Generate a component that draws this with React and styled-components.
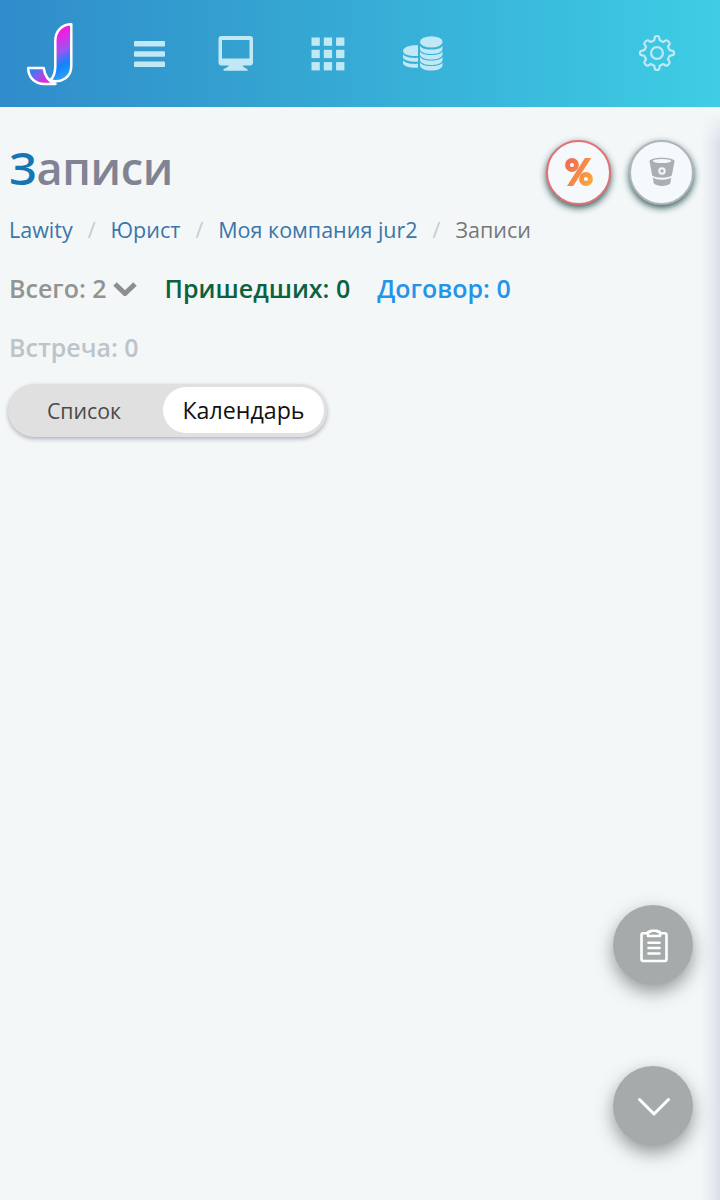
import styled, { createGlobalStyle } from "styled-components";

const GlobalStyle = createGlobalStyle`
    * {
        box-sizing: border-box;
    }
    body {
        margin: 0;
        background: #f3f7f8;
        font-family: "Open Sans", "Noto Sans", sans-serif;
    }
`;

const crumbs = ['Lawity', 'Юрист', 'Моя компания jur2'];

const stats = [
    { label: 'Всего', count: 2, color: '#929494', gap: 28, hasMenu: true },
    { label: 'Пришедших', count: 0, color: '#0c613f', gap: 27 },
    { label: 'Договор', count: 0, color: '#2394e8', gap: 0 },
    { label: 'Встреча', count: 0, color: '#bcc4ca', gap: 0 },
];

const Logo = () => (
    <svg width="54" height="70" viewBox="0 0 54 70">
        <defs>
            <linearGradient id="stem" x1="0.3" y1="0" x2="0.5" y2="1">
                <stop offset="0.2" stopColor="#f01ee4" />
                <stop offset="0.5" stopColor="#9a55f0" />
                <stop offset="0.75" stopColor="#0d86fb" />
                <stop offset="1" stopColor="#35a0f5" />
            </linearGradient>
            <linearGradient id="hook" x1="0" y1="0" x2="1" y2="0.6">
                <stop offset="0.1" stopColor="#1688f8" />
                <stop offset="0.45" stopColor="#7b60ee" />
                <stop offset="0.8" stopColor="#e02bdc" />
            </linearGradient>
        </defs>
        <g stroke="#fff" strokeWidth="2.500" strokeLinejoin="round">
            <path d="M48.300 5.200C39 5.200 32.300 12 32.300 22V47C32.300 54 30.500 58.500 27 61.500C39 64.500 48.300 58 48.300 47Z" fill="url(#stem)" />
            <path d="M5.200 49H20.700C21.700 57 26 62.500 32.500 65H21.500C11.500 65 5.200 58 5.200 49Z" fill="url(#hook)" />
        </g>
    </svg>
);

const MenuIcon = () => (
    <svg width="32" height="28" viewBox="0 0 32 28" fill="currentColor">
        <rect x="0" y="1" width="31" height="5.500" rx="1" />
        <rect x="0" y="11.200" width="31" height="5.500" rx="1" />
        <rect x="0" y="21.400" width="31" height="5.500" rx="1" />
    </svg>
);

const ScreenIcon = () => (
    <svg width="36" height="36" viewBox="0 0 36 36" fill="currentColor">
        <path fillRule="evenodd" d="M3.500 0H32a3 3 0 0 1 3 3V26.500a3 3 0 0 1-3 3H24.500C25 31 27 32 29.500 33.200V34.800H5.500V33.200C8 32 10 31 11 29.500H3.500a3 3 0 0 1-3-3V3a3 3 0 0 1 3-3ZM4 4V22.500H31.500V4Z" />
    </svg>
);

const GridIcon = () => (
    <svg width="34" height="34" viewBox="0 0 34 34" fill="currentColor">
        {[0, 12.300, 24.600].map((y) => (
            [0, 12.300, 24.600].map((x) => (
                <rect key={`${x}-${y}`} x={x + 0.500} y={y + 0.500} width="8.300" height="8.300" />
            ))
        ))}
    </svg>
);

const CoinsIcon = () => (
    <svg width="40" height="36" viewBox="0 0 40 36" fill="currentColor">
        <ellipse cx="28.300" cy="5.900" rx="11.300" ry="5.700" />
        {[0, 5.500, 11, 16.500].map((y) => (
            <path key={y} transform={`translate(0 ${y})`} d="M17 9.700C19.500 14.900 37 14.900 39.500 9.700V13.200C37.500 19.700 19 19.700 17 13.200Z" />
        ))}
        <path d="M15 9.200C7 8.700 0 11 0 15C0 18.500 7 20.600 15 20Z" />
        <path d="M0 18.300C2.500 21.300 8 22.200 15 21.800V25.800C8 26.200 2 24.900 0 21.800Z" />
        <path d="M0 24.300C2.500 27.300 8 28.200 15 27.800V31.800C8 32.200 2 30.900 0 27.800Z" />
    </svg>
);

const GearIcon = () => (
    <svg width="38" height="38" viewBox="-19 -19 38 38" fill="none" stroke="currentColor" strokeWidth="2.200" strokeLinejoin="round">
        <circle r="5.900" />
        <path d="M-2.200 -15.500Q-2 -17 0 -17Q2 -17 2.200 -15.500L2.800 -12.700Q4.700 -11.700 6.300 -11L8.800 -12.600Q10 -13.200 11.500 -11.500Q13.200 -10 12.600 -8.800L11 -6.300Q11.700 -4.700 12.700 -2.800L15.500 -2.200Q17 -2 17 0Q17 2 15.500 2.200L12.700 2.800Q11.700 4.700 11 6.300L12.600 8.800Q13.200 10 11.500 11.500Q10 13.200 8.800 12.600L6.300 11Q4.700 11.700 2.800 12.700L2.200 15.500Q2 17 0 17Q-2 17 -2.200 15.500L-2.800 12.700Q-4.700 11.700 -6.300 11L-8.800 12.600Q-10 13.200 -11.500 11.500Q-13.200 10 -12.600 8.800L-11 6.300Q-11.700 4.700 -12.700 2.800L-15.500 2.200Q-17 2 -17 0Q-17 -2 -15.500 -2.200L-12.700 -2.800Q-11.700 -4.700 -11 -6.300L-12.600 -8.800Q-13.200 -10 -11.500 -11.500Q-10 -13.200 -8.800 -12.600L-6.300 -11Q-4.700 -11.700 -2.800 -12.700Z" />
    </svg>
);

const PercentIcon = () => (
    <svg width="28" height="28" viewBox="0 0 28 28" fill="none" strokeWidth="4.800">
        <defs>
            <linearGradient id="percent" gradientUnits="userSpaceOnUse" x1="0" y1="4" x2="28" y2="20">
                <stop offset="0" stopColor="#ee6a55" />
                <stop offset="1" stopColor="#faa53c" />
            </linearGradient>
        </defs>
        <circle cx="7" cy="7" r="4.500" stroke="url(#percent)" />
        <circle cx="21" cy="21" r="4.500" stroke="url(#percent)" />
        <path d="M20 0H26.300L8.200 28H2Z" fill="url(#percent)" />
    </svg>
);

const BucketIcon = () => (
    <svg width="26" height="30" viewBox="0 0 26 30">
        <path fill="#abafb1" d="M0.500 4.500C0.500 -0.500 25.500 -0.500 25.500 4.500L22.800 18.500C19 21.500 7 21.500 3.200 18.500Z" />
        <ellipse cx="13" cy="4" rx="9.300" ry="2.100" fill="#f4f8fa" />
        <circle cx="13" cy="14" r="2.700" fill="#abafb1" stroke="#f4f8fa" strokeWidth="2" />
        <path fill="#abafb1" d="M3.800 20.500C8 23.500 18 23.500 22.200 20.500L21.200 26.500C18 29.700 8 29.700 4.800 26.500Z" />
    </svg>
);

const ClipboardIcon = () => (
    <svg width="28" height="34" viewBox="0 0 28 34" fill="none" stroke="#fff" strokeWidth="2.600" strokeLinejoin="round">
        <path d="M8 4.200H3.200Q1.500 4.200 1.500 6V30.300Q1.500 32 3.200 32H24.800Q26.500 32 26.500 30.300V6Q26.500 4.200 24.800 4.200H20" />
        <path d="M8 3.200Q8 2.600 9 2.600H10.500L11 1.800H17L17.500 2.600H19Q20 2.600 20 3.200V7H8Z" />
        <path d="M8.500 13.700H19.500M8.500 19H19.500M8.500 24.500H19.500" strokeLinecap="round" />
    </svg>
);

const ArrowIcon = () => (
    <svg width="34" height="20" viewBox="0 0 34 20" fill="none" stroke="#fff" strokeWidth="3" strokeLinecap="round" strokeLinejoin="round">
        <path d="M2.500 2.500L17 17L31.500 2.500" />
    </svg>
);

const CaretIcon = () => (
    <svg width="24" height="16" viewBox="0 0 24 16" fill="none" stroke="#8c8e8f" strokeWidth="5">
        <path d="M2 4L12 13.500L22 4" />
    </svg>
);

const App = () => {
    return (
        <Page>
            <GlobalStyle />
            <Header>
                <LogoLink href="#"><Logo /></LogoLink>
                <NavButton $ml={57}><MenuIcon /></NavButton>
                <NavButton $ml={52}><ScreenIcon /></NavButton>
                <NavButton $ml={57}><GridIcon /></NavButton>
                <NavButton $ml={58}><CoinsIcon /></NavButton>
                <NavButton $ml="auto"><GearIcon /></NavButton>
            </Header>
            <Main>
                <Content>
                    <TitleRow>
                        <Title>Записи</Title>
                        <RoundButton $border="#e76f74"><PercentIcon /></RoundButton>
                        <RoundButton $border="#aeb5ba"><BucketIcon /></RoundButton>
                    </TitleRow>
                    <Breadcrumbs>
                        {crumbs.map((item) => (
                            <Crumb key={item}><a href="#">{item}</a></Crumb>
                        ))}
                        <Crumb>Записи</Crumb>
                    </Breadcrumbs>
                    <Stats>
                        {stats.map((item) => (
                            <Stat key={item.label} $color={item.color} $gap={item.gap}>
                                {item.label}: {item.count}
                                {item.hasMenu && <CaretIcon />}
                            </Stat>
                        ))}
                    </Stats>
                    <Switch>
                        <SwitchItem>Список</SwitchItem>
                        <SwitchItem $active>Календарь</SwitchItem>
                    </Switch>
                </Content>
                <EdgeShadow />
            </Main>
            <FloatingButtons>
                <FloatingButton><ClipboardIcon /></FloatingButton>
                <FloatingButton><ArrowIcon /></FloatingButton>
            </FloatingButtons>
        </Page>
    );
};

const Page = styled.div`
    display: flex;
    flex-direction: column;
    height: 1200px;
    overflow: hidden;
`;
const Header = styled.header`
    display: flex;
    align-items: center;
    flex-shrink: 0;
    height: 107px;
    padding: 0 44px 0 23px;
    background: linear-gradient(90deg, #308ccb 0%, #34a2d0 35%, #38b2d9 60%, #3ecde4 100%);
`;
const LogoLink = styled.a`
    display: flex;
    margin-top: 1px;
`;
const NavButton = styled.button`
    display: flex;
    margin-left: ${(props) => (props.$ml === 'auto' ? 'auto' : `${props.$ml}px`)};
    margin-top: ${(props) => (props.$ml === 'auto' ? '-2px' : '0')};
    padding: 0;
    border: none;
    background: none;
    color: #c1e8f5;
    cursor: pointer;
`;
const Main = styled.main`
    display: flex;
    flex: 1;
`;
const Content = styled.div`
    flex: 1;
    padding-left: 9px;
`;
const EdgeShadow = styled.div`
    width: 19px;
    margin-top: 6px;
    background: linear-gradient(90deg, #f3f7f8 0%, #e9ecf2 50%, #dbdee8 100%);
    mask-image: linear-gradient(transparent, #000 30px);
`;
const TitleRow = styled.div`
    display: flex;
    align-items: center;
    gap: 18px;
    height: 98px;
    padding: 32px 7px 0 0;
`;
const Title = styled.h1`
    flex: 1;
    margin: -9px 0 0;
    color: #7f8394;
    font-size: 45px;
    line-height: 61px;
    font-weight: 600;
    letter-spacing: -0.3px;

    &::first-letter {
        color: #1476b2;
    }
`;
const RoundButton = styled.button`
    display: flex;
    align-items: center;
    justify-content: center;
    width: 65px;
    height: 65px;
    padding: 0;
    border: 2px solid ${(props) => props.$border};
    border-radius: 50%;
    background: #f6f9fb;
    box-shadow: 0 3px 7px rgba(20, 65, 65, 0.85);
    cursor: pointer;
`;
const Breadcrumbs = styled.ul`
    display: flex;
    height: 52px;
    margin: 0;
    padding: 10px 0 0;
    list-style: none;
    font-size: 21.5px;
    line-height: 30px;
`;
const Crumb = styled.li`
    color: #777;

    & + &::before {
        content: '/';
        padding: 0 15px;
        color: #c8cccf;
    }
    a {
        color: #3a76aa;
        text-decoration: none;
    }
`;
const Stats = styled.div`
    display: flex;
    flex-wrap: wrap;
    width: 600px;
    padding-top: 1px;
`;
const Stat = styled.div`
    display: flex;
    align-items: center;
    gap: 6px;
    height: 59px;
    margin-right: ${(props) => props.$gap}px;
    color: ${(props) => props.$color};
    font-size: 25px;
    font-weight: 600;
    white-space: pre;
`;
const Switch = styled.div`
    display: flex;
    width: 319px;
    height: 53px;
    margin: 8px 0 0 -1px;
    padding: 3px 3px 4px 0;
    border-radius: 27px;
    background: #e0e0e0;
    box-shadow: 0 2px 4px rgba(70, 75, 100, 0.4);
`;
const SwitchItem = styled.button`
    width: ${(props) => (props.$active ? '161px' : '155px')};
    padding: ${(props) => (props.$active ? '0' : '0 3px 0 0')};
    border: none;
    border-radius: 23px;
    background: ${(props) => (props.$active ? '#fff' : 'transparent')};
    color: ${(props) => (props.$active ? '#111' : '#4a4a4a')};
    font-family: inherit;
    font-size: ${(props) => (props.$active ? '23.2px' : '21.3px')};
    cursor: pointer;
`;
const FloatingButtons = styled.div`
    position: fixed;
    right: 27px;
    bottom: 54px;
    display: flex;
    flex-direction: column;
    gap: 81px;
`;
const FloatingButton = styled.button`
    display: flex;
    align-items: center;
    justify-content: center;
    width: 80px;
    height: 80px;
    padding: 2px 0 0 2px;
    border: none;
    border-radius: 50%;
    background: #a5abab;
    box-shadow: 0 7px 17px rgba(60, 60, 65, 0.5);
    cursor: pointer;
`;
export default App;
